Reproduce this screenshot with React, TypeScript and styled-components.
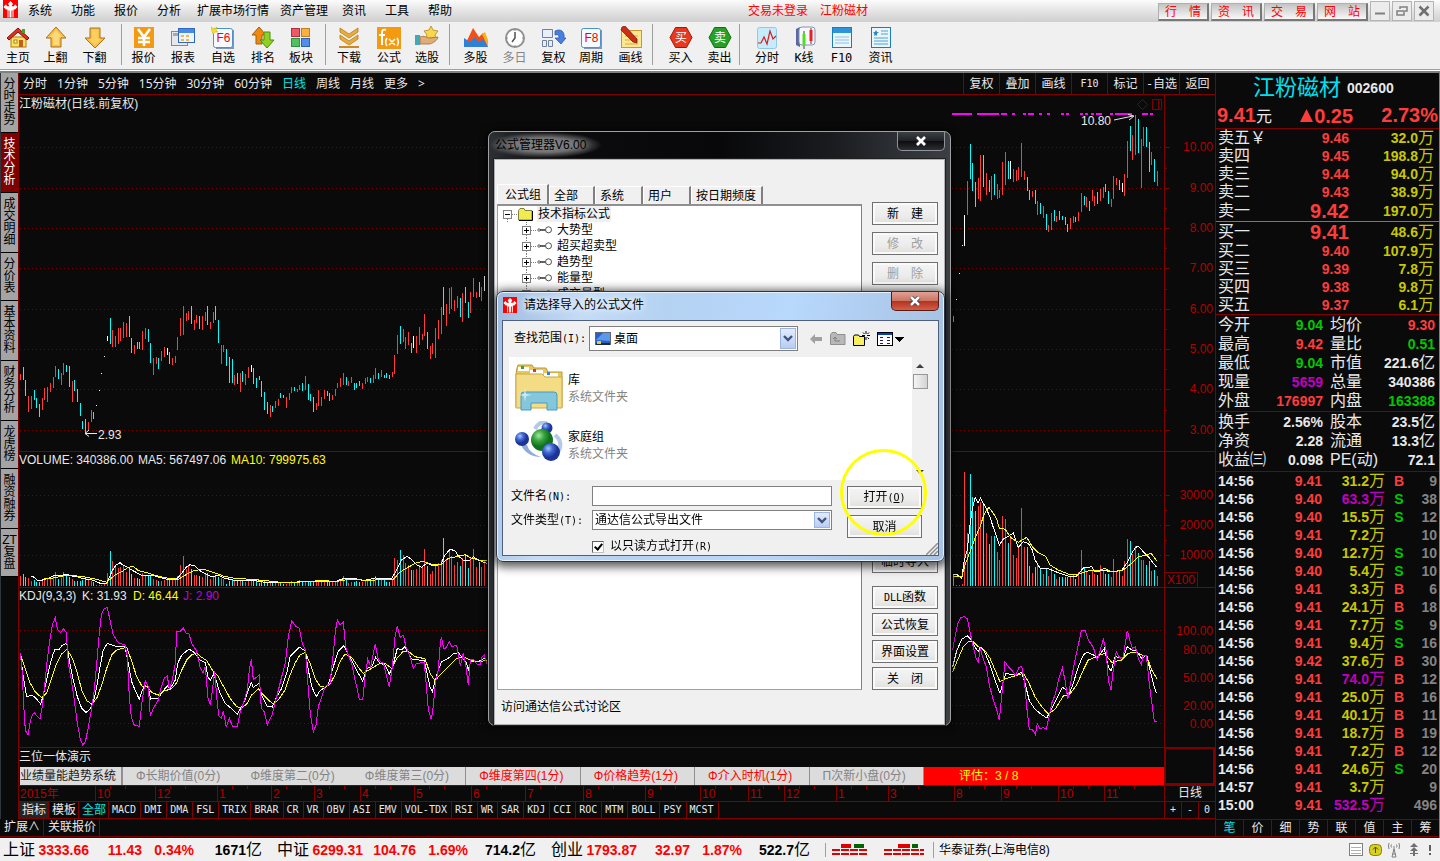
import React from 'react';
import styled, { createGlobalStyle } from 'styled-components';

const SANS = '"Liberation Sans", "Noto Sans CJK SC", sans-serif';
const SONG = '"DejaVu Sans Mono", "Noto Sans CJK SC", monospace';

const C = {
  bg: '#0a0a0a', line: '#800000', axis: '#b40000', red: '#ff3c3c', cyan: '#00ffff', green: '#00c800',
  yellow: '#c8c800', purple: '#c000c0', text: '#e8e8e8', gray: '#848484',
};

const GlobalStyle = createGlobalStyle`
  *, *::before, *::after { box-sizing: border-box; }
  body { margin: 0; background: ${C.bg}; font: 12px/16px ${SANS}; color: #000; }
  button, input, select { font: inherit; color: inherit; margin: 0; padding: 0; border-radius: 0; }
  button { border: 0; background: none; white-space: nowrap; cursor: default; }
  svg { display: block; flex: none; }
`;

/* ---------- shell ---------- */
const Shell = styled.div`
  position: relative; display: flex; flex-direction: column; min-height: 100vh; min-width: 1200px; overflow: hidden;
`;
const MenuBar = styled.header`
  display: flex; height: 22px; padding: 0 6px 0 3px; background: linear-gradient(#fcfcfc, #e4e4e4 50%, #cfcfcf);
`;
const Menu = styled.nav`display: flex; padding-left: 10px;`;
const MenuItem = styled.button<{ $w: number }>`width: ${p => p.$w}px; text-align: left; line-height: 22px;`;
const Notice = styled.div`
  flex: 1; display: flex; gap: 12px; padding-left: 277px; line-height: 22px; color: #f00; white-space: nowrap;
`;
const QuickLinks = styled.div`display: flex; align-items: center; gap: 2px;`;
const QuickButton = styled.button`
  width: 51px; height: 18px; color: #f00; line-height: 16px; margin-top: 2px;
  background: linear-gradient(#c4c4c4, #f8f8f8);
  border: 1px solid #b0b0b0; border-right: 2px solid #787878; border-bottom: 2px solid #787878;
`;
const WindowButton = styled.button`
  width: 20px; height: 20px; display: grid; place-items: center; border: 1px solid #b4b4b4; background: #ececec;
`;

const ToolBar = styled.div`display: flex; height: 47px; background: #f0f0f0;`;
const ToolGroup = styled.div<{ $pad: number }>`display: flex; padding: 4px 0 0 ${p => p.$pad}px;`;
const ToolButton = styled.button<{ $w: number; $off?: boolean }>`
  width: ${p => p.$w}px; display: flex; flex-direction: column; align-items: center;
  color: ${p => (p.$off ? '#848484' : '#000')};
`;
const ToolLabel = styled.span`font-family: ${SONG}; line-height: 16px; font-size: 12px;`;
const ToolSep = styled.i<{ $gap: number }>`width: 1px; margin: 2px 0 4px ${p => p.$gap}px; background: #a0a0a0;`;
const Divider = styled.div`
  height: 4px; background: #fff; border-top: 1px solid #a0a0a0; border-bottom: 2px solid #808080;
`;

const Main = styled.main`display: flex; flex: 1; border-right: 1px solid #808080; background: ${C.bg};`;
const LeftColumn = styled.div`flex: 1; min-width: 0; display: flex; flex-direction: column;`;
const Work = styled.div`display: flex; flex: 1;`;
const SideTabs = styled.nav`
  width: 18px; flex: none; display: flex; flex-direction: column; border-left: 1px solid #30343c;
`;
const SideTab = styled.button<{ $on?: boolean }>`
  display: flex; flex-direction: column; align-items: center; padding: 5px 0 6px;
  border-bottom: 1px solid #000; background: ${p => (p.$on ? '#800000' : '#a4a4a4')};
  color: ${p => (p.$on ? '#fff' : '#000')}; line-height: 12px; font-size: 12px;
`;
const Center = styled.section`flex: 1; min-width: 0; border-left: 1px solid ${C.line};`;

/* ---------- period bar ---------- */
const PeriodBar = styled.div`
  display: flex; justify-content: space-between; height: 22px; border-bottom: 1px solid ${C.line}; color: ${C.text};
`;
const Periods = styled.div`display: flex; gap: 10px; padding-left: 4px;`;
const Period = styled.button<{ $on?: boolean }>`
  font-family: "Noto Sans", "Noto Sans CJK SC", sans-serif; line-height: 20px;
  color: ${p => (p.$on ? '#00e4e4' : C.text)};
`;
const ChartTools = styled.div`display: flex;`;
const ChartTool = styled.button`
  width: 36px; border-left: 1px solid ${C.line}; font-family: ${SONG}; line-height: 20px;
  & small { font-size: 10px; }
`;

/* ---------- charts ---------- */
const Panel = styled.div`display: flex; border-bottom: 1px solid ${C.line};`;
const Plot = styled.svg`flex: 1 1 0; min-width: 0; font: 12px ${SANS}; overflow: hidden;`;
const Axis = styled.svg`width: 51px; border-left: 1px solid ${C.line}; font: 12px ${SANS};`;

const ScoreTitle = styled.div`height: 19px; line-height: 18px; color: ${C.text};`;
const ScoreArea = styled.div`display: flex; border-bottom: 1px solid ${C.line};`;
const ScoreMain = styled.div`flex: 1; min-width: 0;`;
const ScoreBox = styled.div`width: 51px; border: 2px solid ${C.line}; border-top-width: 1px;`;
const ScoreRow = styled.div`display: flex; height: 18px; margin-left: 1px; background: #dcdcdc; line-height: 18px; white-space: nowrap;`;
const ScoreName = styled.div`width: 103px; color: #202020; border-right: 2px solid #909090;`;
const Score = styled.div<{ $hot?: boolean; $sep?: boolean }>`
  flex: 1; padding-left: 13px; color: ${p => (p.$hot ? '#f00' : '#848484')};
  border-right: 1px solid ${p => (p.$sep ? '#909090' : 'transparent')};
`;
const ScoreTotal = styled.div`width: 240px; padding-left: 35px; background: #f00; color: #ff0;`;

const DateRow = styled.div`display: flex; height: 16px; border-bottom: 1px solid ${C.line};`;
const DateSide = styled.div`width: 51px; text-align: center; border-left: 1px solid ${C.line}; color: ${C.text}; line-height: 15px;`;
const TabRow = styled.div`display: flex; height: 17px; border-bottom: 1px solid ${C.line}; color: ${C.text};`;
const IndTab = styled.button<{ $cn?: boolean; $on?: boolean; $fill?: boolean }>`
  padding: 0 ${p => (p.$cn ? 2 : 4)}px 0 3px; border-right: 1px solid ${C.line}; line-height: 16px;
  font-family: ${SONG}; font-size: ${p => (p.$cn ? 12 : 10)}px; color: ${p => (p.$on ? '#00e4e4' : C.text)};
  background: ${p => (p.$fill ? '#242424' : 'none')};
`;
const ZoomKeys = styled.div`display: flex; width: 51px; margin-left: auto; border-left: 1px solid ${C.line};`;
const ZoomKey = styled.button`flex: 1; font-family: ${SONG}; font-size: 10px; border-left: 1px solid ${C.line}; &:first-child { border: 0; }`;
const ExtRow = styled.div`display: flex; height: 18px; margin-bottom: 1px; border-bottom: 1px solid ${C.line}; color: ${C.text};`;
const ExtTab = styled.button`padding: 0 3px 0 4px; border-right: 1px solid ${C.line}; line-height: 17px;`;

/* ---------- quote panel ---------- */
const Quote = styled.aside`
  width: 224px; flex: none; display: flex; flex-direction: column; border-left: 1px solid ${C.line};
  margin-bottom: 1px; color: ${C.text}; font-weight: 700; font-size: 14px;
`;
const Name = styled.div`
  display: flex; align-items: center; gap: 6px; height: 30px; padding-left: 37px;
  & b { font: 400 22px/30px ${SANS}; color: #00e0f0; }
`;
const Price = styled.div`
  display: flex; justify-content: space-between; height: 26px; padding: 0 1px; border-bottom: 1px solid ${C.line};
  font-size: 20px; line-height: 24px; color: ${C.red};
`;
const Change = styled.span`display: flex; align-items: center; gap: 1px;`;
const Unit = styled.span`font-weight: 400; font-size: 16px;`;
const White = styled.span`color: ${C.text}; font-weight: 400; font-size: 16px;`;
const Book = styled.div<{ $last?: boolean }>`
  display: grid; grid-template-rows: ${p => (p.$last ? '20px repeat(4, 18px)' : 'repeat(4, 18px) 20px')};
  height: 93px; padding: 0 5px 0 2px; border-bottom: 1px solid ${p => (p.$last ? C.line : '#4a7ec8')};
`;
const BookRow = styled.div`display: grid; grid-template-columns: 48px 83px 1fr; line-height: 18px; align-items: center;`;
const Cn = styled.span`font-weight: 400; font-size: 16px; white-space: nowrap; line-height: 18px;`;
const Num = styled.span<{ $c: string; $big?: boolean }>`
  color: ${p => p.$c}; text-align: right; white-space: nowrap; line-height: 18px; font-size: ${p => (p.$big ? 20 : 14)}px;
`;
const Info = styled.div<{ $h: number }>`
  height: ${p => p.$h}px; padding: 0 4px 0 2px; border-bottom: 1px solid ${C.line};
`;
const InfoRow = styled.div`
  display: grid; grid-template-columns: 48px 57px 46px 1fr; height: 19px; align-items: center;
  & > :nth-child(3) { padding-left: 7px; }
`;
const Trades = styled.div`flex: 1; padding: 0 2px; border-bottom: 1px solid ${C.line};`;
const TradeRow = styled.div`
  display: grid; grid-template-columns: 46px 58px 63px 28px 1fr; height: 18px; line-height: 18px;
  & > :nth-child(4) { text-align: center; }
`;
const QuoteTabs = styled.div`display: flex; height: 17px; border-bottom: 1px solid ${C.line};`;
const QuoteTab = styled.button<{ $on?: boolean }>`
  flex: 1; font-weight: 400; font-size: 12px; line-height: 16px; border-left: 1px solid ${C.line};
  color: ${p => (p.$on ? '#00e4e4' : C.text)}; &:first-child { border: 0; }
`;

/* ---------- status bar ---------- */
const Status = styled.footer`display: flex; align-items: center; height: 23px; padding: 0 8px 0 3px; background: #f0f0f0; border-top: 1px solid #fff;`;
const Index = styled.div`
  display: grid; grid-template-columns: 33px 53px 53px 52px 68px; width: 274px; flex: none;
  font-size: 14px; font-weight: 700; line-height: 20px; color: #f00; text-align: right; white-space: nowrap;
`;
const Black = styled.span`color: #000;`;
const IndexName = styled.span`color: #000; font-weight: 400; font-size: 16px; text-align: left;`;
const Broker = styled.span`flex: 1; padding-left: 5px; border-left: 1px solid #a0a0a0;`;
const StatusIcons = styled.div`display: flex; align-items: center; gap: 6px;`;
const Blocks = styled.div`padding: 0 8px 0 6px; border-left: 1px solid #a0a0a0;`;

/* ---------- dialogs ---------- */
const Manager = styled.section`
  position: absolute; left: 488px; top: 131px; width: 463px; height: 595px; display: flex; flex-direction: column;
  padding: 0 5px 5px; border: 1px solid #a0a0a0; border-radius: 7px; box-shadow: 0 0 8px #000;
  background: linear-gradient(90deg, #2c3034, #0c0c0e 12%, #08080a 50%, #1a1c20 75%, #3c4044);
`;
const TitleRow = styled.header<{ $h: number }>`display: flex; justify-content: space-between; align-items: flex-start; height: ${p => p.$h}px; flex: none;`;
const Title = styled.h2<{ $dark?: boolean }>`
  display: flex; align-items: center; gap: 7px; margin: 0; font-size: 12px; font-weight: 400; line-height: 26px; color: #000;
  ${p => (p.$dark
    ? 'margin-left: -5px; padding: 0 16px 0 6px; background: radial-gradient(closest-side, #848484, #707070 55%, transparent); text-shadow: 0 0 6px #909090;'
    : 'padding-left: 1px; text-shadow: 0 0 6px #fff, 0 0 10px #fff;')}
`;
const CloseButton = styled.button<{ $red?: boolean }>`
  width: 48px; height: 19px; display: grid; place-items: center; border: 1px solid ${p => (p.$red ? '#5c1a14' : '#909498')};
  border-top: 0; border-radius: 0 0 5px 5px;
  background: ${p => (p.$red ? 'linear-gradient(#e0a294, #cc7464 48%, #b5301c 50%, #d0604a)' : 'linear-gradient(#3c4044, #202226 48%, #0c0c0e 50%, #2c2e34)')};
`;
const ManagerBody = styled.div`
  flex: 1; display: flex; flex-direction: column; padding: 24px 6px 0 2px; border: 1px solid #b0b0b0; background: #f0f0f0;
  box-shadow: 0 0 0 1px #202020;
`;
const ManagerMain = styled.div`display: flex; gap: 10px; height: 506px;`;
const TabsBox = styled.div`flex: 1; display: flex; flex-direction: column;`;
const FormulaTabs = styled.div`display: flex; align-items: flex-end; height: 20px;`;
const FormulaTab = styled.button<{ $w: number; $on?: boolean }>`
  width: ${p => p.$w}px; height: ${p => (p.$on ? 20 : 18)}px; padding-left: ${p => (p.$on ? 7 : 4)}px; text-align: left;
  border-top: 1px solid #fff; border-left: 1px solid #fff; border-right: 2px solid #808080; line-height: 14px;
`;
const Tree = styled.div`flex: 1; padding: 0 5px; background: #fff; border: 1px solid #a0a0a0; border-right-color: #808080; border-top: 2px solid #909090; overflow: hidden;`;
const TreeRow = styled.div<{ $root?: boolean }>`
  display: flex; align-items: center; height: 16px; padding-left: ${p => (p.$root ? 0 : 19)}px;
  & span { padding: 0 1px; background: ${p => (p.$root ? '#f0f0f0' : 'none')}; margin-left: 4px; }
`;
const FormulaButtons = styled.div`display: flex; flex-direction: column; justify-content: space-between; padding-top: 18px;`;
const ButtonStack = styled.div<{ $gap: number }>`display: flex; flex-direction: column; gap: ${p => p.$gap}px;`;
const FormButton = styled.button<{ $w: number; $push?: boolean }>`
  width: ${p => p.$w}px; height: 23px; line-height: 18px; border: 1px solid #707070;
  background: linear-gradient(#f4f4f4, #ececec 60%, #e0ded8); box-shadow: inset 0 0 0 2px #fafafa;
  font-family: ${SONG}; font-size: 12px; margin-bottom: ${p => (p.$push ? 9 : 0)}px;
  &:disabled { color: #a0a0a0; }
  & small { font-size: 10px; }
`;
const ManagerFoot = styled.a`padding: 8px 4px; line-height: 18px; color: #000; text-decoration: none;`;

const FileDialog = styled.section`
  position: absolute; left: 496px; top: 291px; width: 449px; height: 271px; display: flex; flex-direction: column;
  padding: 0 5px 6px; border: 1px solid #30343c; border-radius: 7px; box-shadow: 0 2px 10px 3px rgba(0, 0, 0, .65), inset 0 0 0 1px #e4f0fc;
  background: linear-gradient(100deg, #9dbbe0, #c4dcf6 18%, #b4d2f2 35%, #b8d8fc 60%, #a8c4e4 90%);
`;
const FileBody = styled.form`
  flex: 1; border: 1px solid #50607c; background: #f0f0f0; padding: 5px 0 0 6px; position: relative;
`;
const LookRow = styled.div`display: flex; align-items: center; height: 25px; padding-left: 5px;`;
const Label = styled.label<{ $w: number }>`
  width: ${p => p.$w}px; font-family: ${SONG}; white-space: nowrap; & small { font-size: 10px; }
`;
const SelectBox = styled.div<{ $w: number; $h: number }>`
  position: relative; width: ${p => p.$w}px; height: ${p => p.$h}px; border: 1px solid #808080; background: #fff;
  display: flex; align-items: center;
`;
const Select = styled.select<{ $pad: number }>`
  appearance: none; flex: 1; height: 100%; border: 0; background: transparent; padding-left: ${p => p.$pad}px; outline: 0;
`;
const Arrow = styled.span`
  position: absolute; right: 1px; top: 1px; bottom: 1px; width: 16px; display: grid; place-items: center; pointer-events: none;
  border: 1px solid #9cb4e0; background: linear-gradient(#e4ecfc, #b8ccf4);
`;
const Overlay = styled.span`position: absolute; left: 5px; top: 5px; pointer-events: none;`;
const LookTools = styled.div`display: flex; gap: 7px; padding-left: 11px; align-items: center;`;
const Files = styled.div`display: flex; width: 419px; height: 123px; margin-top: 6px; background: #fff;`;
const FileList = styled.div`flex: 1; padding: 7px 6px;`;
const FileItem = styled.div`display: flex; gap: 5px; height: 57px;`;
const FileText = styled.div`padding-top: 8px; line-height: 17px; color: #848484; & b { display: block; font-weight: 400; color: #000; }`;
const ScrollBar = styled.div`width: 16px; display: flex; flex-direction: column; align-items: center; padding: 7px 0 6px; background: #f0f0f0;`;
const Thumb = styled.i`width: 15px; height: 15px; margin: 6px 0 auto; border: 1px solid #989898; background: linear-gradient(90deg, #f4f4f4, #d4d4d4);`;
const Fields = styled.div`display: flex; justify-content: space-between; width: 413px; padding: 6px 0 0 2px;`;
const FieldCol = styled.div`display: flex; flex-direction: column; gap: 4px;`;
const Field = styled.div`display: flex; align-items: center; height: 20px;`;
const TextInput = styled.input`width: 240px; height: 20px; border: 1px solid #808080; background: #fff; padding: 0 3px; outline: 0;`;
const CheckRow = styled.label`display: flex; align-items: center; gap: 6px; padding-left: 81px; margin-top: 4px; font-family: ${SONG}; & small { font-size: 10px; }`;
const Check = styled.input`
  appearance: none; width: 12px; height: 12px; display: grid; place-items: center; border: 1px solid #c0c0c0; background: #fff;
  border-top: 1px solid #606060; border-left: 1px solid #606060;
  &:checked::after { content: ''; width: 5px; height: 8px; margin-top: -2px; border: solid #000; border-width: 0 2px 2px 0; transform: rotate(40deg); }
`;
const Grip = styled.svg`position: absolute; right: 0; bottom: 0;`;
const Ring = styled.i`
  position: absolute; left: 840px; top: 449px; width: 87px; height: 87px; border: 3px solid #ff0; border-radius: 50%; pointer-events: none;
`;

/* ---------- chart data: x, high, low, colour, volume top; three units to a pixel ---------- */
type Bar = { x: number; a: number; b: number; c: string; v: number };
const parse = (s: string): Bar[] =>
  s.trim().split(/\s+/).map(t => {
    const p = t.split(',');
    return { x: +p[0], a: +p[1], b: +p[2], c: p[3], v: +p[4] };
  });
const EARLY = parse(`61,732,750,r,378 70,711,750,c,372 76,750,798,c,381 85,798,846,r,384 94,798,837,r,393 103,780,809,c,390 109,804,834,c,396 118,822,861,c,396
127,804,840,r,390 133,774,809,r,384 142,771,816,r,387 151,759,786,r,381 160,741,774,r,378 166,708,741,r,366 175,717,747,c,387 184,729,765,r,384 190,699,735,r,366
199,705,726,c,378 208,708,771,c,381 217,753,816,r,387 223,750,783,c,393 232,777,816,c,393 241,819,858,c,393 247,873,897,c,390 256,867,909,c,387 265,876,903,r,390
274,840,876,r,393 280,846,867,c,396 289,825,828,w,405 298,780,783,w,405 304,729,732,w,405 313,678,681,w,399 322,618,633,w,369 331,564,642,c,303 337,600,651,r,333
346,618,651,r,348 355,594,642,r,354 361,594,633,r,351 370,576,624,r,348 379,579,621,r,366 388,558,621,c,351 394,624,669,c,372 403,645,672,r,384 412,636,657,c,384
418,636,657,c,387 427,603,660,r,369 436,594,627,r,375 445,597,636,c,378 451,639,699,c,378 460,684,735,r,387 469,681,702,r,390 475,684,717,c,393 484,663,693,r,393
493,651,681,r,390 502,654,675,w,390 508,666,702,c,390 517,684,705,r,387 526,678,699,r,390 532,621,660,r,378 541,564,618,r,345 550,528,615,r,318 559,549,573,r,357
565,543,570,r,348 574,528,582,c,357 583,570,600,r,375 589,555,579,r,375 598,558,597,c,378 607,558,600,r,381 616,546,573,r,369 622,528,585,c,369 631,576,597,r,387
640,546,579,r,378 646,528,570,c,375 655,570,639,c,381 664,645,702,r,384 670,645,666,r,387 679,657,708,c,402 688,681,759,c,393 697,687,759,c,390 703,735,765,r,393
712,729,762,c,393 721,729,786,r,393 727,723,756,c,393 736,732,765,r,396 745,711,744,r,390 754,705,726,w,390 760,714,762,c,393 769,744,774,c,393 778,738,750,c,399
784,753,801,c,396 793,786,840,c,393 802,816,852,c,396 811,825,861,r,393 817,828,846,c,399 826,813,834,r,399 835,807,828,r,399 841,789,804,c,399 850,795,804,c,402
859,801,834,r,402 868,789,810,r,396 874,771,789,r,393 883,771,783,c,396 892,777,786,r,396 898,765,780,r,390 907,759,783,c,393 916,738,780,r,393 925,762,810,c,393
931,792,813,c,396 940,801,846,c,396 949,819,840,r,396 955,780,828,r,390 964,801,828,r,393 973,780,807,r,393 982,783,798,c,396 988,789,813,c,396 997,795,810,r,396
1006,777,798,r,393 1012,759,774,r,390 1021,744,771,r,387 1030,729,765,r,378 1039,741,765,c,390 1045,753,768,r,399 1054,741,759,r,396 1063,759,780,c,396
1069,759,774,c,393 1078,753,768,c,396 1087,759,777,r,396 1096,744,762,r,393 1102,741,756,r,393 1111,744,759,c,393 1120,735,759,r,387 1126,714,747,r,378
1135,729,747,c,387 1144,720,741,r,387 1153,735,744,c,390 1159,729,744,c,396 1168,735,747,c,396 1177,726,741,r,387 1183,675,732,r,324 1192,615,672,r,330
1201,588,642,c,300 1210,597,636,r,315 1216,621,657,r,339 1225,606,645,r,345 1234,639,669,c,360 1240,618,654,w,360 1249,618,669,r,357 1258,591,645,r,345
1267,612,630,r,348 1273,552,618,r,297 1282,606,657,c,348 1291,648,687,r,372 1297,639,672,r,363 1306,594,684,r,348 1315,570,627,r,339 1324,531,612,r,330
1330,471,555,c,264 1339,522,588,r,330 1348,474,552,r,303 1354,471,537,r,318 1363,510,543,r,345 1372,498,534,r,336 1381,504,561,c,348 1387,489,576,r,324
1396,471,519,c,318 1405,516,564,c,354 1411,486,549,r,324 1420,444,501,r,297 1429,486,504,r,351 1438,456,501,c,336 1444,471,513,r,351 1453,438,483,w,333`);
const LATE = parse(`25,678,696,c,405 34,627,630,w,435 43,549,552,w,435 52,465,468,w,432 58,375,468,w,96 67,273,375,r,279 76,162,267,c,102 82,219,303,c,171 91,276,351,c,213
100,264,327,r,198 106,195,333,r,186 115,195,291,c,195 124,249,315,r,279 133,270,306,c,312 139,258,330,r,288 148,252,315,c,288 157,282,327,r,336 163,300,324,r,360
172,216,315,r,228 181,186,285,r,237 190,213,267,c,309 196,213,267,w,288 205,237,276,r,345 214,240,273,r,354 220,231,270,r,321 229,159,261,r,204 238,243,270,r,321
247,261,303,c,321 253,300,330,c,378 262,303,321,r,399 271,300,342,c,381 277,333,375,r,372 286,339,372,c,387 295,348,384,r,402 304,372,420,c,387 310,405,426,r,408
319,369,420,r,384 328,360,393,c,402 334,378,396,r,417 343,363,390,c,411 352,378,390,c,411 361,381,405,c,411 367,402,426,c,411 376,384,417,r,408 385,378,399,r,405
391,381,396,c,417 400,366,393,r,396 409,309,366,r,330 418,318,345,c,384 424,321,351,r,393 433,333,363,c,405 442,300,333,r,390 448,318,348,r,402 457,306,342,c,405
466,297,333,r,375 475,291,324,r,393 481,282,306,c,402 490,303,342,c,402 499,327,351,r,411 505,258,327,r,357 514,264,285,r,396 523,270,300,c,390 532,279,306,w,408
538,252,318,r,363 547,153,264,r,297 556,108,183,c,303 562,135,210,r,342 571,75,195,r,318 580,87,189,c,339 589,147,294,r,360 595,111,168,r,360 604,111,171,c,375
613,156,246,c,363 619,186,225,r,393 628,207,276,c,390 637,243,288,r,408`);
const SIGNALS = [[21, 81], [96, 162], [168, 186], [201, 210], [234, 243], [249, 267], [282, 291], [306, 315], [348, 357], [363, 372], [405, 414], [420, 429], [438, 447], [453, 471], [495, 504], [510, 561], [591, 609], [615, 624]];

const LATE_X = 926;
const MA = {
  w1: '94,379 103,382 112,390 124,391 136,388 148,384 160,378 172,376 190,375 205,374 215,378 230,380 250,386 265,388 280,391 295,398 310,402 320,400 328,382 337,362 347,346 360,338 370,346 385,353 395,360 410,368 425,376 445,375 465,378 485,384 505,389 530,387 545,370 558,352 570,344 585,348 600,362 615,371 635,380 655,376 675,385 700,390 730,392 760,391 790,396 830,396 870,398 920,393 960,396 1010,393 1030,386 1060,384 1090,392 1125,384 1175,385 1190,360 1205,330 1220,319 1232,326 1250,345 1265,352 1280,340 1300,347 1322,344 1335,315 1350,298 1365,302 1375,318 1390,330 1408,332 1420,320 1435,330 1460,340',
  y1: '133,386 160,384 190,378 225,377 260,382 290,388 320,397 345,375 370,362 385,352 400,349 415,362 440,368 470,377 500,384 535,388 555,376 580,362 610,358 640,367 670,378 700,384 750,388 800,392 850,398 900,396 960,392 1010,394 1050,388 1100,391 1180,388 1200,366 1220,354 1250,338 1270,334 1300,345 1325,342 1345,325 1370,320 1395,314 1415,325 1440,331 1460,332',
  w2: '23,402 35,403 50,416 58,360 67,330 75,255 83,200 91,172 99,190 106,174 115,190 125,208 135,232 145,262 155,290 163,316 175,297 190,289 205,279 220,322 235,305 250,310 262,330 270,360 285,384 310,386 340,398 370,408 395,408 415,384 440,380 450,396 480,390 495,396 530,391 545,370 560,340 572,322 580,319 595,335 610,350 625,370 635,382',
  y2: '23,408 50,410 60,375 75,335 90,295 105,260 115,230 125,210 132,202 145,220 155,238 163,264 180,268 200,295 220,307 245,292 262,320 280,338 303,350 315,375 340,390 370,402 400,402 430,393 460,392 480,385 500,396 535,390 560,370 580,350 600,346 618,340 635,362',
};
const KDJ = {
  j1: '61,609 66,660 72,780 76,840 84,856 90,818 97,795 103,787 110,798 120,806 127,770 133,716 142,628 151,560 158,520 166,504 173,540 182,548 190,536 199,548 205,640 214,690 223,750 232,820 241,868 248,884 256,876 265,832 274,780 283,720 290,640 297,560 304,495 312,476 322,473 330,510 340,555 355,578 375,585 382,620 388,740 394,800 403,826 418,829 427,750 436,692 445,710 451,798 460,775 475,750 484,710 493,685 502,678 508,716 517,690 526,640 530,545 541,544 550,534 558,550 567,552 575,580 589,602 600,650 609,670 616,650 624,745 631,765 640,700 644,664 650,740 656,798 664,805 670,782 679,832 688,804 697,828 712,830 720,790 730,760 742,720 748,660 754,628 760,688 770,682 778,675 784,775 793,785 802,825 817,792 830,740 845,680 856,640 865,560 875,512 888,530 898,534 907,580 916,600 922,680 931,790 940,845 948,825 955,770 965,740 975,710 990,700 1000,610 1006,545 1012,510 1020,525 1030,517 1037,590 1046,620 1055,640 1063,680 1070,710 1078,748 1088,750 1095,680 1103,628 1112,650 1120,610 1126,581 1135,630 1150,640 1160,680 1168,712 1177,650 1185,560 1192,527 1200,562 1210,556 1218,590 1230,620 1240,655 1250,640 1273,638 1280,720 1285,780 1294,808 1300,770 1306,700 1315,660 1320,590 1324,560 1332,598 1340,590 1348,575 1356,590 1370,585 1376,620 1381,648 1390,610 1398,650 1405,706 1411,630 1420,628 1430,642 1440,645 1446,620 1453,615 1460,642',
  k1: '61,612 70,680 80,740 95,736 105,742 122,762 130,735 142,680 151,640 160,610 166,597 176,600 186,586 200,580 208,630 220,690 232,740 245,775 258,787 270,778 283,745 292,700 300,650 310,600 322,580 345,588 375,590 385,640 395,695 405,720 418,748 427,720 436,706 445,715 452,747 475,744 490,722 502,708 510,716 526,690 533,640 545,615 567,597 580,605 600,630 616,638 624,680 631,692 640,672 648,690 660,730 675,760 690,772 712,793 722,775 735,750 745,720 754,698 760,712 778,700 785,735 802,770 817,771 830,740 845,715 860,670 870,620 885,605 898,591 916,603 925,660 935,710 949,740 960,722 985,705 1000,650 1015,604 1031,587 1040,605 1060,640 1075,670 1088,693 1100,655 1115,650 1127,622 1140,640 1155,645 1168,672 1178,650 1192,595 1205,600 1215,590 1235,627 1273,632 1280,665 1290,710 1297,726 1306,690 1315,660 1325,635 1345,625 1360,612 1375,608 1390,628 1398,635 1405,660 1412,635 1430,636 1453,625 1460,632',
  d1: '61,612 75,655 90,698 105,725 125,743 140,728 155,685 170,640 185,612 200,598 215,620 230,662 245,720 260,752 275,762 290,745 305,705 320,655 335,615 350,600 380,592 392,625 410,680 427,710 440,708 455,727 475,736 490,724 515,716 530,698 545,660 560,630 575,614 590,610 605,622 620,632 640,665 652,675 670,708 690,745 710,770 725,774 740,762 755,735 775,716 790,735 805,750 820,762 835,750 855,720 870,675 885,640 900,615 916,607 930,640 945,685 960,708 975,712 990,702 1005,675 1020,635 1035,612 1055,622 1075,652 1090,670 1110,658 1140,640 1155,640 1175,655 1190,625 1210,604 1225,604 1245,620 1275,626 1290,670 1305,692 1320,675 1345,650 1370,625 1390,620 1410,630 1440,636 1460,630',
  j2: '23,630 30,590 38,550 48,532 58,530 67,536 76,580 85,620 94,658 100,666 106,625 115,658 124,680 133,735 145,780 155,808 163,840 172,750 180,665 190,680 200,690 212,706 222,682 230,680 238,720 245,800 253,868 262,868 271,884 277,850 285,866 295,862 304,868 312,830 320,790 330,765 342,715 352,683 360,720 368,778 380,710 392,650 400,615 409,572 420,570 430,600 445,622 457,660 466,630 475,597 483,630 490,720 498,750 505,690 514,635 525,655 535,650 541,610 547,572 556,606 562,625 571,620 580,655 589,675 595,645 604,645 613,730 622,800 628,843 635,845',
  k2: '23,680 35,632 50,598 67,587 80,600 90,622 100,635 108,620 120,638 135,675 150,720 165,760 175,725 182,700 210,706 230,696 240,730 253,782 270,808 290,824 305,834 315,815 330,785 352,742 362,748 370,770 385,730 400,680 415,645 425,637 445,644 457,655 478,625 490,680 498,694 510,650 535,655 547,620 560,630 571,630 590,655 605,645 615,690 625,730 634,760',
  d2: '23,695 40,655 55,620 70,605 85,605 100,620 120,632 135,655 150,690 165,725 180,716 210,708 235,700 250,725 270,770 290,800 310,822 330,808 355,768 375,762 395,735 415,690 430,660 450,652 478,640 500,667 530,660 550,640 570,636 590,645 605,648 620,690 637,718',
};

const Line = ({ pts, dx, dy, c }: { pts: string; dx: number; dy: number; c: string }) => (
  <polyline
    points={pts.split(' ').map(p => { const [x, y] = p.split(',').map(Number); return `${(x / 3 + dx).toFixed(1)},${(y / 3 + dy).toFixed(1)}`; }).join(' ')}
    fill="none" stroke={c} strokeWidth="1" shapeRendering="crispEdges" />
);
const barColor: Record<string, string> = { r: C.red, c: C.cyan, w: '#fff' };
const Candles = ({ d, dx, dy }: { d: Bar[]; dx: number; dy: number }) => (
  <>{d.map(b => <rect key={b.x} x={Math.floor(b.x / 3) + dx} y={Math.round(b.a / 3) + dy} width="1" height={Math.round((b.b - b.a) / 3)} fill={barColor[b.c]} />)}</>
);
const Volumes = ({ d, dx, dy, base }: { d: Bar[]; dx: number; dy: number; base: number }) => (
  <>{d.map(b => <rect key={b.x} x={Math.floor(b.x / 3) + dx} y={Math.round(b.v / 3) + dy} width="1" height={Math.round((base - b.v) / 3)} fill={barColor[b.c === 'w' ? 'r' : b.c]} />)}</>
);
const Grid = ({ ys }: { ys: number[] }) => (
  <>{ys.map(y => <line key={y} x1="1" x2="100%" y1={y + 0.5} y2={y + 0.5} stroke={C.line} strokeDasharray="1 3" shapeRendering="crispEdges" />)}</>
);
const AxisLabels = ({ items, ticks = true }: { items: [string, number][]; ticks?: boolean }) => (
  <>{items.map(([t, y]) => (
    <g key={t}>
      {ticks && <rect x="0" y={y} width="5" height="1" fill={C.line} />}
      <text x="48" y={y + 4} textAnchor="end" fill={C.axis}>{t}</text>
    </g>
  ))}</>
);
const PRICES: [string, number][] = [['10.00', 52], ['9.00', 93], ['8.00', 133], ['7.00', 173], ['6.00', 214], ['5.00', 254], ['4.00', 294], ['3.00', 335]];
const MONTHS: [string, number][] = [['10', 77], ['12', 137], ['1', 199], ['2', 253], ['3', 296], ['4', 342], ['5', 396], ['6', 453], ['7', 507], ['8', 565], ['9', 627], ['10', 682], ['11', 730], ['12', 766], ['1', 818], ['3', 870], ['8', 936], ['9', 983], ['10', 1040], ['11', 1086]];

/* ---------- icons ---------- */
const Logo = ({ w = 15, h = 17 }: { w?: number; h?: number }) => (
  <svg width={w} height={h} viewBox="0 0 15 17" preserveAspectRatio="none">
    <rect width="15" height="17" fill="#f00" />
    <path d="M7.500 1l2.500 2.500L8.500 6H11l1-2 2.500 2.500L12 9h-1.500v7.500h-1V10h-1v6.500h-2V10h-1v6.500h-1V9H3L.5 6.500 3 4l1 2h2.500L5 3.500z" fill="#fff" />
  </svg>
);
const I = ({ children }: { children: React.ReactNode }) => <svg width="24" height="24" viewBox="0 0 24 24">{children}</svg>;
const Hex = ({ c, d, t }: { c: string; d: string; t: string }) => (
  <I>
    <path d="M6.500 1.500h11l5.500 10-5.500 10h-11L1 11.500z" fill={c} stroke={d} />
    <text x="12" y="16" fontSize="12" textAnchor="middle" fill="#fff" fontFamily="Noto Sans CJK SC">{t}</text>
  </I>
);
const FKey = ({ t, star }: { t: string; star?: boolean }) => (
  <I>
    <path d="M5 4h18v19H5z" fill="#8098b8" />
    <rect x="2.500" y="2.500" width="19" height="19" rx="2" fill="#f4faff" stroke="#5090c8" />
    <text x="12.500" y="16" fontSize="12" textAnchor="middle" fill="#f00" fontFamily="Liberation Sans">{t}</text>
    {star && <path d="M0 1l3 2 3-2-1 3 2 2-3 0-2 2-1-3z" fill="#f8e020" stroke="#c8a800" strokeWidth=".5" />}
  </I>
);
const icons: Record<string, React.ReactNode> = {
  主页: <I><rect x="5" y="11" width="15" height="10" fill="#fce060" stroke="#b08000" /><path d="M1 12L12 2l11 10-2 2-9-8-9 8z" fill="#e03020" stroke="#801008" /><rect x="16" y="3" width="3" height="4" fill="#4aa030" /><rect x="8" y="14" width="3" height="3" fill="#fff" stroke="#b08000" /><rect x="13" y="14" width="4" height="7" fill="#c06020" /></I>,
  上翻: <I><path d="M12 1l10 11h-5v9H7v-9H2z" fill="#fcc040" stroke="#a87020" /><path d="M12 4l6 7h-3v8H9v-8H6z" fill="#fcd878" /></I>,
  下翻: <I><path d="M12 22L2 12h5V2h10v10h5z" fill="#fcc040" stroke="#a87020" /><path d="M12 19l-6-6h3V4h6v9h3z" fill="#fcd060" /></I>,
  报价: <I><rect x="2" y="1" width="20" height="21" fill="#f49a10" /><path d="M6 3l6 8 6-8M6 12h12M6 16h12M12 11v9" stroke="#fff" strokeWidth="2.600" fill="none" /></I>,
  报表: <I><rect x=".5" y="5.500" width="16" height="14" fill="#e8e8ec" stroke="#888890" /><rect x="2" y="7" width="13" height="3" fill="#a8a8b0" /><rect x="7.500" y="2.500" width="16" height="14" fill="#eef4ff" stroke="#3068c0" /><rect x="8" y="3" width="15" height="4" fill="#4888e8" /><path d="M10 9h3v2h-3zM15 9h3v2h-3zM10 13h3v2h-3zM15 13h3v2h-3z" fill="#f4b840" /></I>,
  自选: <FKey t="F6" star />,
  排名: <I><path d="M8 1l7 8h-4v9H5V9H1z" fill="#f08810" stroke="#a85c08" /><path d="M16 22l-7-8h4V6h6v8h4z" fill="#90d020" stroke="#4c8c10" /></I>,
  板块: <I><rect x="2.500" y="2.500" width="8" height="8" fill="#f05868" stroke="#b03040" /><rect x="12.500" y="2.500" width="8" height="8" fill="#f8b040" stroke="#c08020" /><rect x="2.500" y="12.500" width="8" height="8" fill="#50c060" stroke="#309040" /><rect x="12.500" y="12.500" width="8" height="8" fill="#5090e8" stroke="#3060b0" /></I>,
  下载: <I><path d="M3 2l9 6 9-6v4l-9 6-9-6zM3 9l9 6 9-6v4l-9 6-9-6z" fill="#ecac38" stroke="#b07c20" strokeWidth=".8" /><rect x="2" y="20" width="20" height="2" fill="#d08820" /></I>,
  公式: <I><rect width="24" height="22" y="1" fill="#f49a10" /><path d="M9 4c-3-1-4 0-4 3v12M2 9h6" stroke="#fff" strokeWidth="2" fill="none" /><path d="M10 12c-2 3-2 5 0 8M20 12c2 3 2 5 0 8M12 13l6 6M18 13l-6 6" stroke="#fff" strokeWidth="1.500" fill="none" /></I>,
  选股: <I><path d="M16 0l2 4 5 1-3 4 1 4-5-1-5 1 1-4-3-4 5-1z" fill="#f8d848" stroke="#b08820" strokeWidth=".8" /><path d="M5 11c4-2 7 1 10 1l8-1c0 3-6 7-9 7H5z" fill="#e0ac78" stroke="#9c6c3c" strokeWidth=".8" /><rect y="9" width="5" height="10" fill="#40a8b8" /></I>,
  多股: <I><path d="M0 21L9 2l6 9 4-4 5 14z" fill="#f05018" /><path d="M18 8l3-2 3 8v7z" fill="#f8b020" /><path d="M0 12l6 4 5-5 4 5 4-3 5 8H0z" fill="#3080d8" /></I>,
  多日: <I><circle cx="12" cy="12" r="9" fill="#fff" stroke="#909090" strokeWidth="2" /><path d="M12 6v6l-3 4" stroke="#505050" strokeWidth="1.500" fill="none" /><path d="M12 4v1M12 19v1M4 12h1M19 12h1" stroke="#909090" /></I>,
  复权: <I><path d="M.5 3.500h10v8H.5zM.5 14.500h4v6h-4zM6.500 14.500h4v6h-4z" fill="#e8eefc" stroke="#7080a0" /><path d="M13 5c6-3 10 1 9 7h2l-5 6-6-6h4c0-3-1-4-4-3z" fill="#4880e0" stroke="#2850a8" strokeWidth=".7" /></I>,
  周期: <FKey t="F8" />,
  画线: <I><rect x="2.500" y="4.500" width="20" height="17" fill="#fce890" stroke="#d0942c" /><path d="M6 10h13M6 14h13M6 18h13" stroke="#e0a840" /><path d="M3 1l3-1 12 13v4l-4-1L2 4z" fill="#c83018" stroke="#701408" strokeWidth=".7" /></I>,
  买入: <Hex c="#e83820" d="#a01808" t="买" />,
  卖出: <Hex c="#28a028" d="#107010" t="卖" />,
  分时: <I><rect x="2.500" y="1.500" width="19" height="21" rx="2" fill="#c4ecfc" stroke="#90c8e8" /><path d="M3 17h3l3-6 3 7 3-13 3 8 3-3" stroke="#e01818" strokeWidth="1.200" fill="none" /></I>,
  K线: <I><path d="M4 3l4-2v20l-4-2z" fill="#5868a0" /><rect x="7" y="1" width="16" height="18" rx="3" fill="#f8f8fc" stroke="#8890b0" /><path d="M12 5v18M19 2v16" stroke="#404040" /><rect x="10.500" y="8" width="3" height="12" fill="#50e020" /><rect x="17.500" y="4" width="3" height="11" fill="#e82020" /></I>,
  F10: <I><rect x="2.500" y="1.500" width="19" height="20" fill="#eaf6fc" stroke="#1c7cc0" /><rect x="3" y="2" width="18" height="5" fill="#2c94d8" /><path d="M5 11h14M5 14h14M5 17h14" stroke="#8cc4e4" /></I>,
  资讯: <I><rect x="2.500" y="1.500" width="19" height="20" fill="#eaf6fc" stroke="#1c7cc0" /><path d="M12 5h7M12 8h7M5 12h14M5 15h14M5 18h14" stroke="#4ca4d8" /><path d="M7 4l1 2 2 .5-2 1L8 10l-1-1-2 1 .5-2L4 6.500 6 6z" fill="#2c84c8" /></I>,
};
const XMark = () => (
  <svg width="12" height="10" viewBox="0 0 12 10"><path d="M2 1l8 8M10 1l-8 8" stroke="#303040" strokeWidth="4" /><path d="M2 1l8 8M10 1l-8 8" stroke="#fff" strokeWidth="2.600" /></svg>
);
const Chevron = () => <svg width="10" height="7" viewBox="0 0 10 7"><path d="M1 1l4 4 4-4" fill="none" stroke="#40547c" strokeWidth="2.400" /></svg>;
const PlusMinus = ({ plus }: { plus?: boolean }) => (
  <svg width="15" height="16" viewBox="0 0 15 16" shapeRendering="crispEdges">
    <path d="M4.500 12.500V16M9 8.500h6" stroke="#808080" strokeDasharray="1 1" />{plus && <path d="M4.500 0v4" stroke="#808080" strokeDasharray="1 1" />}
    <rect x=".5" y="4.500" width="8" height="8" fill="#fff" stroke="#808080" />
    <path d={plus ? 'M2 8.500h5M4.500 6v5' : 'M2 8.500h5'} stroke="#000" />
  </svg>
);
const YellowFolder = () => (
  <svg width="15" height="13" viewBox="0 0 15 13"><path d="M.5 2.500L2 .5h4l1 2h7v9.500H.5z" fill="#f0ec50" stroke="#808040" /><path d="M1 12.500h13.500V3" stroke="#000" fill="none" /></svg>
);
const KeyIcon = () => (
  <svg width="15" height="8" viewBox="0 0 15 8"><circle cx="2" cy="4" r="1.200" fill="none" stroke="#606060" /><path d="M3 4h6" stroke="#303030" strokeWidth="1.500" /><circle cx="11.500" cy="3.800" r="3" fill="#fff" stroke="#505050" /></svg>
);
const Library = () => (
  <svg width="48" height="48" viewBox="0 0 48 48">
    <path d="M2 4l1-3h14l2 3h12l2 4h14v35H1V10z" fill="#e8c858" stroke="#b89838" />
    <path d="M3 3h11v4H3zM15 6h13v4H15zM29 9h14v4H29z" fill="#fff" />
    <rect x="6" y="2" width="3" height="3" fill="#38a048" /><rect x="18" y="5" width="3" height="3" fill="#e03828" /><rect x="32" y="8" width="3" height="3" fill="#3080e0" />
    <path d="M1 10h26l3 3h17v31H1z" fill="#f4dc84" stroke="#c8a848" />
    <path d="M6 46V31q0-3 3-3h30q3 0 3 3v15h-10v-7H16v7z" fill="#78c4e4" fillOpacity=".9" stroke="#4898c4" />
    <path d="M10 24l1 6 6 1-6 1-1 6-1-6-6-1 6-1z" fill="#fff" fillOpacity=".6" />
  </svg>
);
const HomeGroup = () => (
  <svg width="48" height="42" viewBox="0 0 48 42">
    <defs>
      <radialGradient id="gb" cx=".35" cy=".3"><stop offset="0" stopColor="#a8c4fc" /><stop offset=".5" stopColor="#4068d4" /><stop offset="1" stopColor="#1c3494" /></radialGradient>
      <radialGradient id="gg" cx=".35" cy=".3"><stop offset="0" stopColor="#a0e8a0" /><stop offset=".5" stopColor="#38a440" /><stop offset="1" stopColor="#10701c" /></radialGradient>
    </defs>
    <path d="M6 24Q12 36 26 36Q14 32 12 24z" fill="#90acd8" /><path d="M20 8Q24 0 32 1M40 14q8 6 4 16" stroke="#b4c8e8" strokeWidth="4" fill="none" />
    <circle cx="7" cy="18" r="7" fill="url(#gb)" /><circle cx="32" cy="7" r="5.500" fill="url(#gb)" /><circle cx="27" cy="19" r="11" fill="url(#gg)" /><circle cx="36" cy="31" r="9" fill="url(#gb)" />
  </svg>
);

/* ---------- content ---------- */
const MENU: [string, number][] = [['系统', 43], ['功能', 43], ['报价', 43], ['分析', 40], ['扩展市场行情', 83], ['资产管理', 62], ['资讯', 43], ['工具', 43], ['帮助', 43]];
const TOOLS: { pad: number; gap: number; items: [string, number][] }[] = [
  { pad: 0, gap: 7, items: [['主页', 36], ['上翻', 39], ['下翻', 39]] },
  { pad: 2, gap: 6, items: [['报价', 39], ['报表', 40], ['自选', 40], ['排名', 40], ['板块', 36]] },
  { pad: 3, gap: 4, items: [['下载', 40], ['公式', 40], ['选股', 36]] },
  { pad: 6, gap: 0, items: [['多股', 39], ['多日', 39], ['复权', 39], ['周期', 36], ['画线', 43]] },
  { pad: 8, gap: 0, items: [['买入', 39], ['卖出', 39]] },
  { pad: 8, gap: 0, items: [['分时', 38], ['K线', 36], ['F10', 39], ['资讯', 39]] },
];
const SIDE = [['分', '时', '走', '势'], ['技', '术', '分', '析'], ['成', '交', '明', '细'], ['分', '价', '表'], ['基', '本', '资', '料'], ['财', '务', '分', '析'], ['龙', '虎', '榜'], ['融', '资', '融', '券'], ['ZT', '复', '盘']];
const INDICATORS = 'MACD DMI DMA FSL TRIX BRAR CR VR OBV ASI EMV VOL-TDX RSI WR SAR KDJ CCI ROC MTM BOLL PSY MCST'.split(' ');
const ASKS = [['卖五￥', '9.46', '32.0'], ['卖四', '9.45', '198.8'], ['卖三', '9.44', '94.0'], ['卖二', '9.43', '38.9'], ['卖一', '9.42', '197.0']];
const BIDS = [['买一', '9.41', '48.6'], ['买二', '9.40', '107.9'], ['买三', '9.39', '7.8'], ['买四', '9.38', '9.8'], ['买五', '9.37', '6.1']];
const INFO: [string, string, string, string, string, string, string?][] = [
  ['今开', '9.04', C.green, '均价', '9.30', C.red], ['最高', '9.42', C.red, '量比', '0.51', C.green],
  ['最低', '9.04', C.green, '市值', '221.6', C.text, '亿'], ['现量', '5659', C.purple, '总量', '340386', C.text],
  ['外盘', '176997', C.red, '内盘', '163388', C.green],
];
const INFO2: typeof INFO = [
  ['换手', '2.56%', C.text, '股本', '23.5', C.text, '亿'], ['净资', '2.28', C.text, '流通', '13.3', C.text, '亿'], ['收益㈢', '0.098', C.text, 'PE(动)', '72.1', C.text],
];
const TRADES = `9.41 31.2 B 9|9.40 63.3 S 38|9.40 15.5 S 12|9.41 7.2 - 10|9.40 12.7 S 10|9.40 5.4 S 10|9.41 3.3 B 6|9.41 24.1 B 18|9.41 7.7 S 9|9.41 9.4 S 16|9.42 37.6 B 30|9.41 74.0 B 12|9.41 25.0 B 16|9.41 40.1 B 11|9.41 18.7 B 19|9.41 7.2 B 12|9.41 24.6 S 20|9.41 3.7 - 9|9.41 532.5 - 496`.split('|').map(t => t.split(' '));
const INDEXES = [['上证', '3333.66', '11.43', '0.34%', '1671'], ['中证', '6299.31', '104.76', '1.69%', '714.2'], ['创业', '1793.87', '32.97', '1.87%', '522.7']];

const InfoRows = ({ rows }: { rows: typeof INFO }) => (
  <>{rows.map(r => (
    <InfoRow key={r[0]}>
      <Cn>{r[0]}</Cn><Num $c={r[2]}>{r[1]}</Num><Cn>{r[3]}</Cn><Num $c={r[5]}>{r[4]}{r[6] && <Unit>{r[6]}</Unit>}</Num>
    </InfoRow>
  ))}</>
);
const BookRows = ({ rows, best }: { rows: string[][]; best: number }) => (
  <>{rows.map((r, i) => (
    <BookRow key={r[0]}><Cn>{r[0]}</Cn><Num $c={C.red} $big={i === best}>{r[1]}</Num><Num $c={C.yellow}>{r[2]}<Unit>万</Unit></Num></BookRow>
  ))}</>
);

export default function App() {
  return (
    <Shell>
      <GlobalStyle />
      <MenuBar>
        <Logo w={15} h={18} />
        <Menu>{MENU.map(([t, w]) => <MenuItem key={t} $w={w}>{t}</MenuItem>)}</Menu>
        <Notice><span>交易未登录</span><span>江粉磁材</span></Notice>
        <QuickLinks>
          {['行　情', '资　讯', '交　易', '网　站'].map(t => <QuickButton key={t}>{t}</QuickButton>)}
          <WindowButton aria-label="最小化"><svg width="12" height="12"><path d="M1 8.500h10" stroke="#808080" strokeWidth="2" /></svg></WindowButton>
          <WindowButton aria-label="还原"><svg width="12" height="12"><path d="M4 4V2h7v4H9M1 6h7v4H1z" fill="none" stroke="#808080" strokeWidth="1.500" /></svg></WindowButton>
          <WindowButton aria-label="关闭"><svg width="12" height="12"><path d="M1.500 1.500l9 9M10.500 1.500l-9 9" stroke="#707070" strokeWidth="2.500" /></svg></WindowButton>
        </QuickLinks>
      </MenuBar>
      <ToolBar>
        {TOOLS.map((g, i) => (
          <React.Fragment key={i}>
            <ToolGroup $pad={g.pad}>
              {g.items.map(([t, w]) => <ToolButton key={t} $w={w} $off={t === '多日'}>{icons[t]}<ToolLabel>{t}</ToolLabel></ToolButton>)}
            </ToolGroup>
            {i < 5 && <ToolSep $gap={g.gap} />}
          </React.Fragment>
        ))}
      </ToolBar>
      <Divider />
      <Main>
        <LeftColumn>
          <Work>
            <SideTabs>{SIDE.map((s, i) => <SideTab key={i} $on={i === 1}>{s.map((ch, j) => <span key={j}>{ch}</span>)}</SideTab>)}</SideTabs>
            <Center>
              <PeriodBar>
                <Periods>{['分时', '1分钟', '5分钟', '15分钟', '30分钟', '60分钟', '日线', '周线', '月线', '更多', '>'].map(t => <Period key={t} $on={t === '日线'}>{t}</Period>)}</Periods>
                <ChartTools>{['复权', '叠加', '画线', 'F10', '标记', '-自选', '返回'].map(t => <ChartTool key={t}>{t === 'F10' ? <small>F10</small> : t}</ChartTool>)}</ChartTools>
              </PeriodBar>
              <Panel>
                <Plot height="356">
                  <Grid ys={PRICES.map(p => p[1])} />
                  <Candles d={EARLY} dx={-19} dy={35} /><Candles d={LATE} dx={LATE_X} dy={-5} />
                  {SIGNALS.map(([a, b]) => <rect key={a} x={a / 3 + LATE_X} y="18" width={(b - a) / 3} height="2" fill="#f0f" />)}
                  <text x="0" y="13" fill={C.text}>江粉磁材(日线.前复权)</text>
                  <path d="M66 338.500h12M70 335l-4 3.500 4 3" stroke={C.text} fill="none" /><text x="79" y="344" fill={C.text}>2.93</text>
                  <text x="1062" y="30" fill={C.text}>10.80</text><path d="M1095 25l19-4M1109 19.500l6 1.500-5 4" stroke={C.text} fill="none" />
                  <path d="M1118.500 9.500l5-5 5 5-5 5zM1133.500 4.500h9v10h-9zM1139.500 4.500v10" stroke={C.line} fill="none" />
                </Plot>
                <Axis height="356">
                  {[73, 113, 153, 194, 234, 274, 315].map(y => <rect key={y} y={y} width="2" height="1" fill={C.line} />)}
                  <AxisLabels items={PRICES} />
                </Axis>
              </Panel>
              <Panel>
                <Plot height="135">
                  <Grid ys={[43, 73, 103]} />
                  <Volumes d={EARLY} dx={-19} dy={-2} base={408} /><Volumes d={LATE} dx={LATE_X} dy={-12} base={438} />
                  <Line pts={MA.w1} dx={-19} dy={-2} c="#fff" /><Line pts={MA.y1} dx={-19} dy={-2} c="#ff0" />
                  <Line pts={MA.w2} dx={LATE_X} dy={-12} c="#fff" /><Line pts={MA.y2} dx={LATE_X} dy={-12} c="#ff0" />
                  <text x="0" y="12" fill={C.text}>VOLUME: 340386.00</text><text x="119" y="12" fill={C.text}>MA5: 567497.06</text><text x="212" y="12" fill="#ff0">MA10: 799975.63</text>
                </Plot>
                <Axis height="135">
                  <AxisLabels items={[['30000', 43], ['20000', 73], ['10000', 103]]} />
                  <rect y="58" width="2" height="1" fill={C.line} /><rect y="88" width="2" height="1" fill={C.line} />
                  <path d="M0 120.500h32.500V135" stroke={C.line} fill="none" /><text x="2" y="132" fill={C.axis}>X100</text>
                </Axis>
              </Panel>
              <Panel>
                <Plot height="159">
                  <Grid ys={[42, 61, 89, 117, 135]} />
                  <Line pts={KDJ.k1} dx={-19} dy={-138} c="#fff" /><Line pts={KDJ.d1} dx={-19} dy={-138} c="#ff0" /><Line pts={KDJ.j1} dx={-19} dy={-138} c="#f0f" />
                  <Line pts={KDJ.k2} dx={LATE_X} dy={-148} c="#fff" /><Line pts={KDJ.d2} dx={LATE_X} dy={-148} c="#ff0" /><Line pts={KDJ.j2} dx={LATE_X} dy={-148} c="#f0f" />
                  <text x="0" y="12" fill={C.text}>KDJ(9,3,3)</text><text x="63" y="12" fill={C.text}>K: 31.93</text><text x="114" y="12" fill="#ff0">D: 46.44</text><text x="164" y="12" fill="#c800c8">J: 2.90</text>
                </Plot>
                <Axis height="159"><AxisLabels ticks={false} items={[['100.00', 43], ['80.00', 62], ['50.00', 90], ['20.00', 118], ['0.00', 136]]} /></Axis>
              </Panel>
              <ScoreArea>
                <ScoreMain>
                  <ScoreTitle>三位一体演示</ScoreTitle>
                  <ScoreRow>
                    <ScoreName>业绩量能趋势系统</ScoreName>
                    <Score>Φ长期价值(0分)</Score><Score>Φ维度第二(0分)</Score><Score $sep>Φ维度第三(0分)</Score>
                    <Score $hot $sep>Φ维度第四(1分)</Score><Score $hot $sep>Φ价格趋势(1分)</Score><Score $hot $sep>Φ介入时机(1分)</Score>
                    <Score $sep>Π次新小盘(0分)</Score><ScoreTotal>评估：3 / 8</ScoreTotal>
                  </ScoreRow>
                </ScoreMain>
                <ScoreBox />
              </ScoreArea>
              <DateRow>
                <Plot height="15">
                  <text x="1" y="12" fill={C.axis}>2015年</text>
                  {MONTHS.map(([t, x], i) => <g key={i}><rect x={x - 1} width="1" height="15" fill={C.line} /><rect x={x + 14} width="1" height="3" fill={C.line} /><rect x={x + 29} width="1" height="3" fill={C.line} /><text x={x + 1} y="12" fill={C.axis}>{t}</text></g>)}
                </Plot>
                <DateSide>日线</DateSide>
              </DateRow>
              <TabRow>
                <IndTab $cn $fill>指标</IndTab><IndTab $cn>模板</IndTab><IndTab $cn $on>全部</IndTab>
                {INDICATORS.map(t => <IndTab key={t}>{t}</IndTab>)}
                <ZoomKeys>{['+', '-', '0'].map(t => <ZoomKey key={t}>{t}</ZoomKey>)}</ZoomKeys>
              </TabRow>
            </Center>
          </Work>
          <ExtRow><ExtTab>扩展∧</ExtTab><ExtTab>关联报价</ExtTab></ExtRow>
        </LeftColumn>
        <Quote>
          <Name><b>江粉磁材</b><span>002600</span></Name>
          <Price><span>9.41<White>元</White></span><Change><svg width="13" height="13"><path d="M6.500 0L13 13H0z" fill={C.red} /></svg>0.25</Change><span>2.73%</span></Price>
          <Book><BookRows rows={ASKS} best={4} /></Book>
          <Book $last><BookRows rows={BIDS} best={0} /></Book>
          <Info $h={97}><InfoRows rows={INFO} /></Info>
          <Info $h={60}><InfoRows rows={INFO2} /></Info>
          <Trades>
            {TRADES.map((t, i) => (
              <TradeRow key={i}>
                <span>{i < 17 ? '14:56' : i === 17 ? '14:57' : '15:00'}</span>
                <Num $c={C.red}>{t[0]}</Num>
                <Num $c={+t[1] > 50 ? C.purple : C.yellow}>{t[1]}<Unit>万</Unit></Num>
                <Num $c={t[2] === 'B' ? C.red : C.green}>{t[2] === '-' ? '' : t[2]}</Num>
                <Num $c={C.gray}>{t[3]}</Num>
              </TradeRow>
            ))}
          </Trades>
          <QuoteTabs>{['笔', '价', '细', '势', '联', '值', '主', '筹'].map((t, i) => <QuoteTab key={t} $on={i === 0}>{t}</QuoteTab>)}</QuoteTabs>
        </Quote>
      </Main>
      <Status>
        {INDEXES.map(r => <Index key={r[0]}><IndexName>{r[0]}</IndexName><span>{r[1]}</span><span>{r[2]}</span><span>{r[3]}</span><Black>{r[4]}<Unit>亿</Unit></Black></Index>)}
        <Blocks>
          <svg width="93" height="14" shapeRendering="crispEdges">
            <path d="M0 6.500h36M52 6.500h40M0 10.500h36M52 10.500h40" stroke="#e00000" strokeWidth="2" strokeDasharray="8 1" />
            <path d="M9 2.500h10M66 2.500h12" stroke="#e00000" strokeWidth="4" /><path d="M22 2.500h10M80 2.500h6" stroke="#006400" strokeWidth="4" />
          </svg>
        </Blocks>
        <Broker>华泰证券(上海电信8)</Broker>
        <StatusIcons>
          <svg width="14" height="14"><rect x=".5" y=".5" width="13" height="12" fill="#fff" stroke="#808080" /><path d="M2 4.500h10M2 7.500h10M2 10.500h10" stroke="#b0b0b0" /></svg>
          <svg width="13" height="14"><rect x=".5" y="1.500" width="12" height="11" rx="4" fill="#d8d020" stroke="#888400" /><path d="M6.500 4v6M4 6.500l2.500-2.500L9 6.500" stroke="#504c00" fill="none" /></svg>
          <svg width="12" height="16"><path d="M1 1q-1 3 0 6M3.500 2.500q-1 2 0 3M11 1q1 3 0 6M8.500 2.500q1 2 0 3M6 4v5M6 7l-2 8h4zM4 12h4" stroke="#808080" fill="none" /></svg>
          <svg width="16" height="14"><path d="M8 0l4 4H4zM8 4l4 4H4zM4 10h8v1H4zM7 8h2v5H7z" fill="#707070" /></svg>
          <svg width="4" height="10"><path d="M2 0v6M2 8v2" stroke="#606060" strokeWidth="2" /></svg>
        </StatusIcons>
      </Status>

      <Manager aria-label="公式管理器">
        <TitleRow $h={27}><Title $dark>公式管理器V6.00</Title><CloseButton aria-label="关闭"><XMark /></CloseButton></TitleRow>
        <ManagerBody>
          <ManagerMain>
            <TabsBox>
              <FormulaTabs>
                <FormulaTab $w={52} $on>公式组</FormulaTab><FormulaTab $w={46}>全部</FormulaTab><FormulaTab $w={48}>系统</FormulaTab><FormulaTab $w={48}>用户</FormulaTab><FormulaTab $w={72}>按日期频度</FormulaTab>
              </FormulaTabs>
              <Tree>
                <TreeRow $root><PlusMinus /><YellowFolder /><span>技术指标公式</span></TreeRow>
                {['大势型', '超买超卖型', '趋势型', '能量型', '成交量型'].map(t => <TreeRow key={t}><PlusMinus plus /><KeyIcon /><span>{t}</span></TreeRow>)}
              </Tree>
            </TabsBox>
            <FormulaButtons>
              <ButtonStack $gap={7}><FormButton $w={66}>新　建</FormButton><FormButton $w={66} disabled>修　改</FormButton><FormButton $w={66} disabled>删　除</FormButton></ButtonStack>
              <ButtonStack $gap={4}>
                <FormButton $w={66} $push>临时导入</FormButton><FormButton $w={66}><small>DLL</small>函数</FormButton><FormButton $w={66}>公式恢复</FormButton><FormButton $w={66}>界面设置</FormButton><FormButton $w={66}>关　闭</FormButton>
              </ButtonStack>
            </FormulaButtons>
          </ManagerMain>
          <ManagerFoot href="#forum">访问通达信公式讨论区</ManagerFoot>
        </ManagerBody>
      </Manager>

      <FileDialog aria-label="请选择导入的公式文件">
        <TitleRow $h={28}><Title><Logo w={14} h={16} />请选择导入的公式文件</Title><CloseButton $red aria-label="关闭"><XMark /></CloseButton></TitleRow>
        <FileBody>
          <LookRow>
            <Label $w={75} htmlFor="look">查找范围<small>(I):</small></Label>
            <SelectBox $w={209} $h={25}>
              <Overlay><svg width="17" height="14" viewBox="0 0 17 14"><rect x=".5" y=".5" width="15" height="12" fill="#2860c8" stroke="#606878" /><path d="M1 8l7-7h7v8z" fill="#5c98ec" /><path d="M1 11h14v2H1z" fill="#202830" /><path d="M2 9h4v3H2z" fill="#e8c840" /></svg></Overlay>
              <Select id="look" $pad={24} defaultValue="桌面"><option>桌面</option></Select>
              <Arrow><Chevron /></Arrow>
            </SelectBox>
            <LookTools>
              <svg width="14" height="12" viewBox="0 0 14 12"><path d="M1 6l5-5v3h7v4H6v3z" fill="#a0a0a0" /></svg>
              <svg width="16" height="13" viewBox="0 0 16 13"><path d="M.5 2.500L2 .5h4l1 2h8v10H.5z" fill="#b8b8b8" stroke="#909090" /><path d="M5 9V5M3 7l2-2 2 2M5 9h5" stroke="#808080" fill="none" /></svg>
              <svg width="17" height="15" viewBox="0 0 17 15"><path d="M.5 5.500l1-1.500h4l1 1.500h5v9H.5z" fill="#f8f060" stroke="#000" /><path d="M13 0v3M13 6v3M9 4.500h3M14 4.500h3M10 1.500l1.500 1.500M16 1.500L14.500 3M16 8l-1.500-1.500" stroke="#000" /></svg>
              <svg width="29" height="14" viewBox="0 0 29 14" shapeRendering="crispEdges"><rect x=".5" y=".5" width="15" height="13" fill="#fff" stroke="#000" /><path d="M1 2h14" stroke="#0040c0" strokeWidth="2" /><path d="M3 5.500h3M10 5.500h3M3 8.500h3M10 8.500h3M3 11.500h3M10 11.500h3" stroke="#202060" /><path d="M18 5h9l-4.500 5z" fill="#000" /></svg>
            </LookTools>
          </LookRow>
          <Files>
            <FileList>
              <FileItem><Library /><FileText><b>库</b>系统文件夹</FileText></FileItem>
              <FileItem><HomeGroup /><FileText><b>家庭组</b>系统文件夹</FileText></FileItem>
            </FileList>
            <ScrollBar>
              <svg width="8" height="4"><path d="M0 4l4-4 4 4z" fill="#404040" /></svg><Thumb /><svg width="8" height="4"><path d="M0 0h8L4 4z" fill="#404040" /></svg>
            </ScrollBar>
          </Files>
          <Fields>
            <FieldCol>
              <Field><Label $w={81} htmlFor="fname">文件名<small>(N):</small></Label><TextInput id="fname" type="text" autoFocus /></Field>
              <Field><Label $w={81} htmlFor="ftype">文件类型<small>(T):</small></Label>
                <SelectBox $w={240} $h={20}><Select id="ftype" $pad={2} defaultValue="通达信公式导出文件"><option>通达信公式导出文件</option></Select><Arrow><Chevron /></Arrow></SelectBox>
              </Field>
              <CheckRow><Check type="checkbox" defaultChecked /><span>以只读方式打开<small>(R)</small></span></CheckRow>
            </FieldCol>
            <ButtonStack $gap={6}><FormButton type="button" $w={75}>打开<small>(<u>O</u>)</small></FormButton><FormButton type="button" $w={75}>取消</FormButton></ButtonStack>
          </Fields>
          <Grip width="12" height="12"><path d="M12 0L0 12M12 4L4 12M12 8l-4 4" stroke="#909090" strokeWidth="1.500" /></Grip>
        </FileBody>
      </FileDialog>
      <Ring />
    </Shell>
  );
}
